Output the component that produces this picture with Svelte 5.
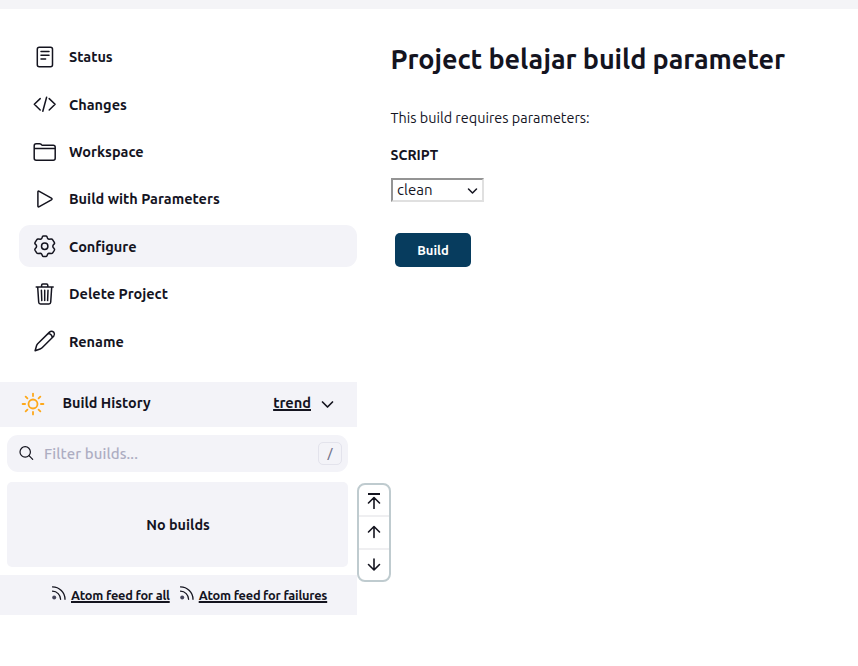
<script>
  const tasks = [
    { icon: 'status', label: 'Status' },
    { icon: 'changes', label: 'Changes' },
    { icon: 'workspace', label: 'Workspace' },
    { icon: 'play', label: 'Build with Parameters' },
    { icon: 'gear', label: 'Configure', active: true },
    { icon: 'trash', label: 'Delete Project' },
    { icon: 'pencil', label: 'Rename' }
  ];
  const feeds = [
    { label: 'Atom feed for all' },
    { label: 'Atom feed for failures' }
  ];
  const rays = [0, 45, 90, 135, 180, 225, 270, 315];
</script>

<div class="page">
  <div class="crumbs"></div>
  <div class="columns">
    <aside>
      <nav>
        {#each tasks as t}
          <a class="task" class:active={t.active}>
            <svg viewBox="0 0 24 24" width="24" height="24">
              {#if t.icon === 'status'}
                <rect x="4.3" y="2.2" width="15.2" height="19.6" rx="2" />
                <path d="M8 6.5h8M8 10.2h8M8 14h4.6" />
              {:else if t.icon === 'changes'}
                <path d="M7.2 6.6L1.3 12.3l5.9 5.7M16.2 6.6l5.9 5.7-5.9 5.7M13.6 5.3L9.8 19.3" />
              {:else if t.icon === 'workspace'}
                <path d="M1.2 9.3V5.8q0-2 2-2h3.4q.7 0 1.3.4l.8.6q.6.4 1.3.4h10.2q2 0 2 2v11.1q0 2-2 2h-17q-2 0-2-2V8.6h21" />
              {:else if t.icon === 'play'}
                <path d="M4.9 5.1v13.8q0 1.6 1.4.8L18.4 12.8q1.3-.8 0-1.6L6.3 4.3q-1.4-.8-1.4.8z" />
              {:else if t.icon === 'gear'}
                <g transform="translate(-.3 .3)">
                  <circle cx="12" cy="12" r="3.2" />
                  <path d="M9.7 2.5Q10 1.7 10.8 1.7H13.2Q14 1.7 14.3 2.5L14.8 3.8Q15.2 4.7 16.3 5L18.4 4.8Q19.5 4.7 20 5.5L21.6 8Q22.2 9 21.4 9.8L20.5 10.8Q19.8 12 20.5 13.2L21.4 14.2Q22.2 15 21.6 16L20 18.5Q19.5 19.3 18.4 19.2L16.3 19Q15.2 19.3 14.8 20.2L14.3 21.5Q14 22.3 13.2 22.3H10.8Q10 22.3 9.7 21.5L9.2 20.2Q8.8 19.3 7.7 19L5.6 19.2Q4.5 19.3 4 18.5L2.4 16Q1.8 15 2.6 14.2L3.5 13.2Q4.2 12 3.5 10.8L2.6 9.8Q1.8 9 2.4 8L4 5.5Q4.5 4.7 5.6 4.8L7.7 5Q8.8 4.7 9.2 3.8z" />
                </g>
              {:else if t.icon === 'trash'}
                <path transform="translate(-.3 0)" d="M5 5.2l1 15q.1 1.7 1.8 1.7h8.4q1.7 0 1.8-1.7l1-15M3.5 5.1h17M8.9 5V3.3Q8.9 2.1 10.1 2.1h3.8q1.2 0 1.2 1.2V5M12 8.3v10.3M8.7 8.3l.4 10.3M15.3 8.3l-.4 10.3" />
              {:else}
                <path transform="translate(-.3 0)" d="M16.8 3.1L5 14.7Q4.2 15.5 3.9 16.5L2.4 21.7 7.4 20Q8.6 19.6 9.4 18.8L21 7.2Q22.5 5.4 21.2 3.4 18.9 1.2 16.8 3.1zM15.5 4.5q3.7.4 4 4" />
              {/if}
            </svg>
            <span>{t.label}</span>
          </a>
        {/each}
      </nav>

      <div class="history-head">
        <svg class="sun" viewBox="0 0 24 24" width="24" height="24">
          <circle cx="12" cy="12" r="4.5" />
          {#each rays as r}
            <path d="M12 1.6v2.5" transform="rotate({r} 12 12)" />
          {/each}
        </svg>
        <span class="history-title">Build History</span>
        <a class="trend">trend</a>
        <svg class="chev" viewBox="0 0 14 14" width="14" height="14"><path d="M2.5 5l5 5 5-5" /></svg>
      </div>

      <div class="search">
        <svg viewBox="0 0 18 18" width="18" height="18"><circle cx="7.2" cy="7.9" r="5.2" /><path d="M11 11.7l3.7 3.7" /></svg>
        <span class="placeholder">Filter builds...</span>
        <kbd>/</kbd>
      </div>

      <div class="empty"><span>No builds</span></div>

      <div class="feeds">
        {#each feeds as f}
          <svg viewBox="0 0 14 14" width="14" height="14">
            <circle cx="2.2" cy="11.6" r="2" class="dot" />
            <path d="M.5 5.2a8.2 8.2 0 0 1 8.1 8.1M.5.9a12.5 12.5 0 0 1 12.5 12.4" />
          </svg>
          <a>{f.label}</a>
        {/each}
      </div>

      <div class="pager">
        <div><svg viewBox="0 0 16 18" width="16" height="18"><path d="M2 3h12" class="bar" /><path d="M8 17.5V7M2.5 12L8 6.5l5.5 5.5" /></svg></div>
        <div><svg viewBox="0 0 16 16" width="16" height="16"><path d="M8 13.5V3M2.5 8L8 2.5 13.5 8" /></svg></div>
        <div><svg viewBox="0 0 16 16" width="16" height="16"><path d="M8 2v10.5M2.5 7.5L8 13l5.5-5.5" /></svg></div>
      </div>
    </aside>

    <main>
      <h1>Project belajar build parameter</h1>
      <p>This build requires parameters:</p>
      <div class="param">SCRIPT</div>
      <div class="select">
        <span>clean</span>
        <svg viewBox="0 0 12 12" width="12" height="12"><path d="M2.5 4l4 4 4-4" /></svg>
      </div>
      <button>Build</button>
    </main>
  </div>
</div>

<style>
  :global(body) { background: #fff; }
  .page {
    width: 858px; height: 666px; overflow: hidden;
    font-family: Ubuntu, "Noto Sans", sans-serif;
    font-size: 15px; color: #14141f;
  }
  .page * { box-sizing: border-box; }
  svg { fill: none; stroke: #14141f; stroke-width: 1.5; stroke-linecap: round; stroke-linejoin: round; flex: none; }
  span, a, h1, p { white-space: nowrap; }
  .crumbs { height: 9px; background: #f4f4f7; }
  .columns { display: flex; }
  aside { width: 357px; position: relative; flex: none; }
  nav { padding: 26.8px 0 0 19px; display: flex; flex-direction: column; gap: 5.4px; }
  .task { height: 42px; display: flex; align-items: center; gap: 12px; padding-left: 14px; border-radius: 11px; font-weight: 600; font-size: 14.5px; }
  .task.active { background: #f3f3f8; }
  .history-head { margin-top: 19.8px; height: 45px; background: #f3f3f8; display: flex; align-items: center; padding: 0 23px 0 20.5px; font-weight: 700; font-size: 14.4px; }
  .sun { stroke: #fea81a; stroke-width: 1.8; }
  .history-title { margin-left: 18px; flex: 1; position: relative; top: -1.5px; }
  .trend { font-size: 14.6px; text-decoration: underline; text-decoration-thickness: 2px; text-underline-offset: 1px; position: relative; top: -1.5px; }
  .chev { margin-left: 9px; stroke-width: 1.7; }
  .search { margin: 8px 9px 0 7px; height: 37px; border-radius: 11px; background: #f3f3f8; display: flex; align-items: center; padding: 0 6px 0 11px; }
  .search svg { stroke-width: 1.2; }
  .placeholder { margin-left: 8px; flex: 1; color: #adadc2; font-weight: 500; letter-spacing: .1px; }
  kbd { width: 24px; height: 23px; border: 1px solid #e3e3ec; border-radius: 5px; font: 500 13px Ubuntu, "Noto Sans", sans-serif; color: #73738c; display: flex; align-items: center; justify-content: center; }
  .empty { margin: 10px 9px 0 7px; height: 85px; border-radius: 5px; background: #f3f3f8; display: flex; align-items: center; justify-content: center; font-weight: 700; font-size: 14.4px; padding: 1px 0 0 1px; }
  .feeds { margin-top: 8px; height: 40px; background: #f3f3f8; display: flex; align-items: center; padding-left: 52px; font-size: 12.8px; font-weight: 700; letter-spacing: -.23px; }
  .feeds svg { stroke-width: 1.3; position: relative; top: -2px; }
  .feeds .dot { fill: #44445a; stroke: none; }
  .feeds a { margin: 0 10px 0 5px; text-decoration: underline; text-decoration-thickness: 2px; text-underline-offset: 1px; }
  .pager { position: absolute; left: 357px; top: 474px; width: 34px; height: 99px; border: 2px solid #bfcbcf; border-radius: 8px; background: #fff; display: flex; flex-direction: column; }
  .pager div { flex: 1; display: flex; align-items: center; justify-content: center; }
  .pager div + div { border-top: 2px solid #efeff1; }
  .pager svg { stroke-width: 1.6; }
  .pager .bar { stroke-width: 2; stroke-linecap: butt; }
  main { padding: 30px 0 0 33.5px; }
  h1 { margin: 0; font-size: 27px; font-weight: 700; line-height: 40px; letter-spacing: -.08px; }
  p { margin: 28px 0 0; line-height: 22px; font-size: 14.4px; }
  .param { margin-top: 15px; line-height: 22px; font-weight: 700; font-size: 14px; }
  .select { margin: 12px 0 0 .5px; width: 93px; height: 24px; border: 2px solid; border-color: #949494 #e0e0e0 #e0e0e0 #949494; display: flex; align-items: center; justify-content: space-between; padding: 0 4px 1px; }
  .select svg { position: relative; top: 1px; }
  button { margin: 31px 0 0 4.5px; width: 76px; height: 34px; border: 0; border-radius: 5px; background: #073c5e; color: #fff; font: 700 13px Ubuntu, "Noto Sans", sans-serif; display: flex; align-items: center; justify-content: center; }
</style>
